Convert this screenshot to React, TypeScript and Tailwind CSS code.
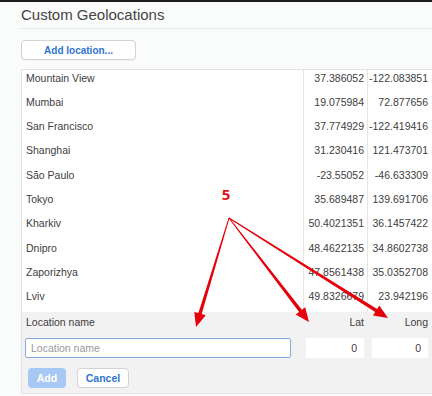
import React from 'react'

const rows = [
  ['Mountain View', '37.386052', '-122.083851'],
  ['Mumbai', '19.075984', '72.877656'],
  ['San Francisco', '37.774929', '-122.419416'],
  ['Shanghai', '31.230416', '121.473701'],
  ['São Paulo', '-23.55052', '-46.633309'],
  ['Tokyo', '35.689487', '139.691706'],
  ['Kharkiv', '50.4021351', '36.1457422'],
  ['Dnipro', '48.4622135', '34.8602738'],
  ['Zaporizhya', '47.8561438', '35.0352708'],
  ['Lviv', '49.8326679', '23.942196'],
]

// tapered arrow from the apex to the tip, head included
const arrowPoints = (ax: number, ay: number, bx: number, by: number) => {
  const len = Math.hypot(bx - ax, by - ay)
  const dx = (bx - ax) / len
  const dy = (by - ay) / len
  const nx = -dy
  const ny = dx
  const headLen = 14
  const headW = 12
  const w0 = 1
  const w1 = 3.5
  const sx = bx - dx * headLen
  const sy = by - dy * headLen
  const pts = [
    [ax + (nx * w0) / 2, ay + (ny * w0) / 2],
    [sx + (nx * w1) / 2, sy + (ny * w1) / 2],
    [sx + (nx * headW) / 2, sy + (ny * headW) / 2],
    [bx, by],
    [sx - (nx * headW) / 2, sy - (ny * headW) / 2],
    [sx - (nx * w1) / 2, sy - (ny * w1) / 2],
    [ax - (nx * w0) / 2, ay - (ny * w0) / 2],
  ]
  return pts.map(p => p.map(v => v.toFixed(1)).join(',')).join(' ')
}

const App = () => {
  return (
    <div className="relative w-[432px] h-[396px] overflow-hidden bg-[#fafbfb] text-[#404040] font-['Liberation_Sans',Arial,sans-serif]">
      <div className="h-[1.5px] bg-[#1c1c1c]" />
      <h1 className="pl-[21px] pt-[3px] pb-[3px] text-[15px] leading-[20px] text-[#444]">Custom Geolocations</h1>
      <div className="ml-[20px] border-t border-[#e8eaea]" />

      <div className="pl-[21px] pt-[8px]">
        <button className="w-[115px] h-[20px] rounded-[4px] border border-[#d3d3d3] bg-white text-[10px] font-semibold text-[#2f74d0] shadow-[0_1px_0_rgba(0,0,0,0.04)]">
          Add location...
        </button>
      </div>

      <div className="mt-[8px] ml-[21px] border-l border-t border-[#e2e4e4]">
        {rows.map(([name, lat, lng]) => (
          <div key={name} className="grid grid-cols-[281px_64px_1fr] h-[24.3px] bg-white text-[10.5px] leading-[13px]">
            <div className="pl-[4px] pt-[2px]">{name}</div>
            <div className="border-l border-[#e4e6e6] pt-[2px] pr-[3px] text-right">{lat}</div>
            <div className="border-l border-[#e4e6e6] pt-[2px] pr-[4px] text-right">{lng}</div>
          </div>
        ))}

        <div className="bg-[#f2f2f3] border-b border-[#e4e4e4] pt-[4px] pb-[5px] text-[10.5px]">
          <div className="grid grid-cols-[281px_64px_1fr] leading-[13px]">
            <div className="pl-[4px]">Location name</div>
            <div className="pr-[3px] text-right">Lat</div>
            <div className="pr-[4px] text-right">Long</div>
          </div>
          <div className="grid grid-cols-[281px_64px_1fr] mt-[9px] h-[20px]">
            <div className="pl-[3px] pr-[12px]">
              <input
                placeholder="Location name"
                className="w-full h-[20px] rounded-[2px] border border-[#86ace2] bg-white px-[5px] text-[10.5px] text-[#333] placeholder:text-[#9a9a9a] outline-none"
              />
            </div>
            <div className="pl-[3px] pr-[3px]">
              <input defaultValue="0" className="w-full h-[20px] bg-white pr-[7px] text-right text-[10.5px] text-[#404040] outline-none" />
            </div>
            <div className="pl-[5px] pr-[4px]">
              <input defaultValue="0" className="w-full h-[20px] bg-white pr-[7px] text-right text-[10.5px] text-[#404040] outline-none" />
            </div>
          </div>
          <div className="flex gap-[11px] pl-[6px] mt-[10px]">
            <button className="w-[38px] h-[20px] rounded-[4px] bg-[#a7c8f3] text-white font-semibold text-[10.5px]">Add</button>
            <button className="w-[52px] h-[20px] rounded-[4px] border border-[#d3d3d3] bg-white text-[#2f74d0] font-semibold text-[10.5px]">Cancel</button>
          </div>
        </div>
      </div>

      <div className="absolute left-[218px] top-[186px] w-[16px] text-center text-[15px] leading-[16px] font-bold text-[#e0141c] font-['Open_Sans',sans-serif]">5</div>
      <svg className="absolute inset-0 pointer-events-none" width="432" height="396">
        <polygon points={arrowPoints(229, 218, 196, 327)} fill="#e5000c" />
        <polygon points={arrowPoints(229, 218, 309, 322)} fill="#e5000c" />
        <polygon points={arrowPoints(229, 218, 388, 318)} fill="#e5000c" />
      </svg>
    </div>
  )
}

export default App
